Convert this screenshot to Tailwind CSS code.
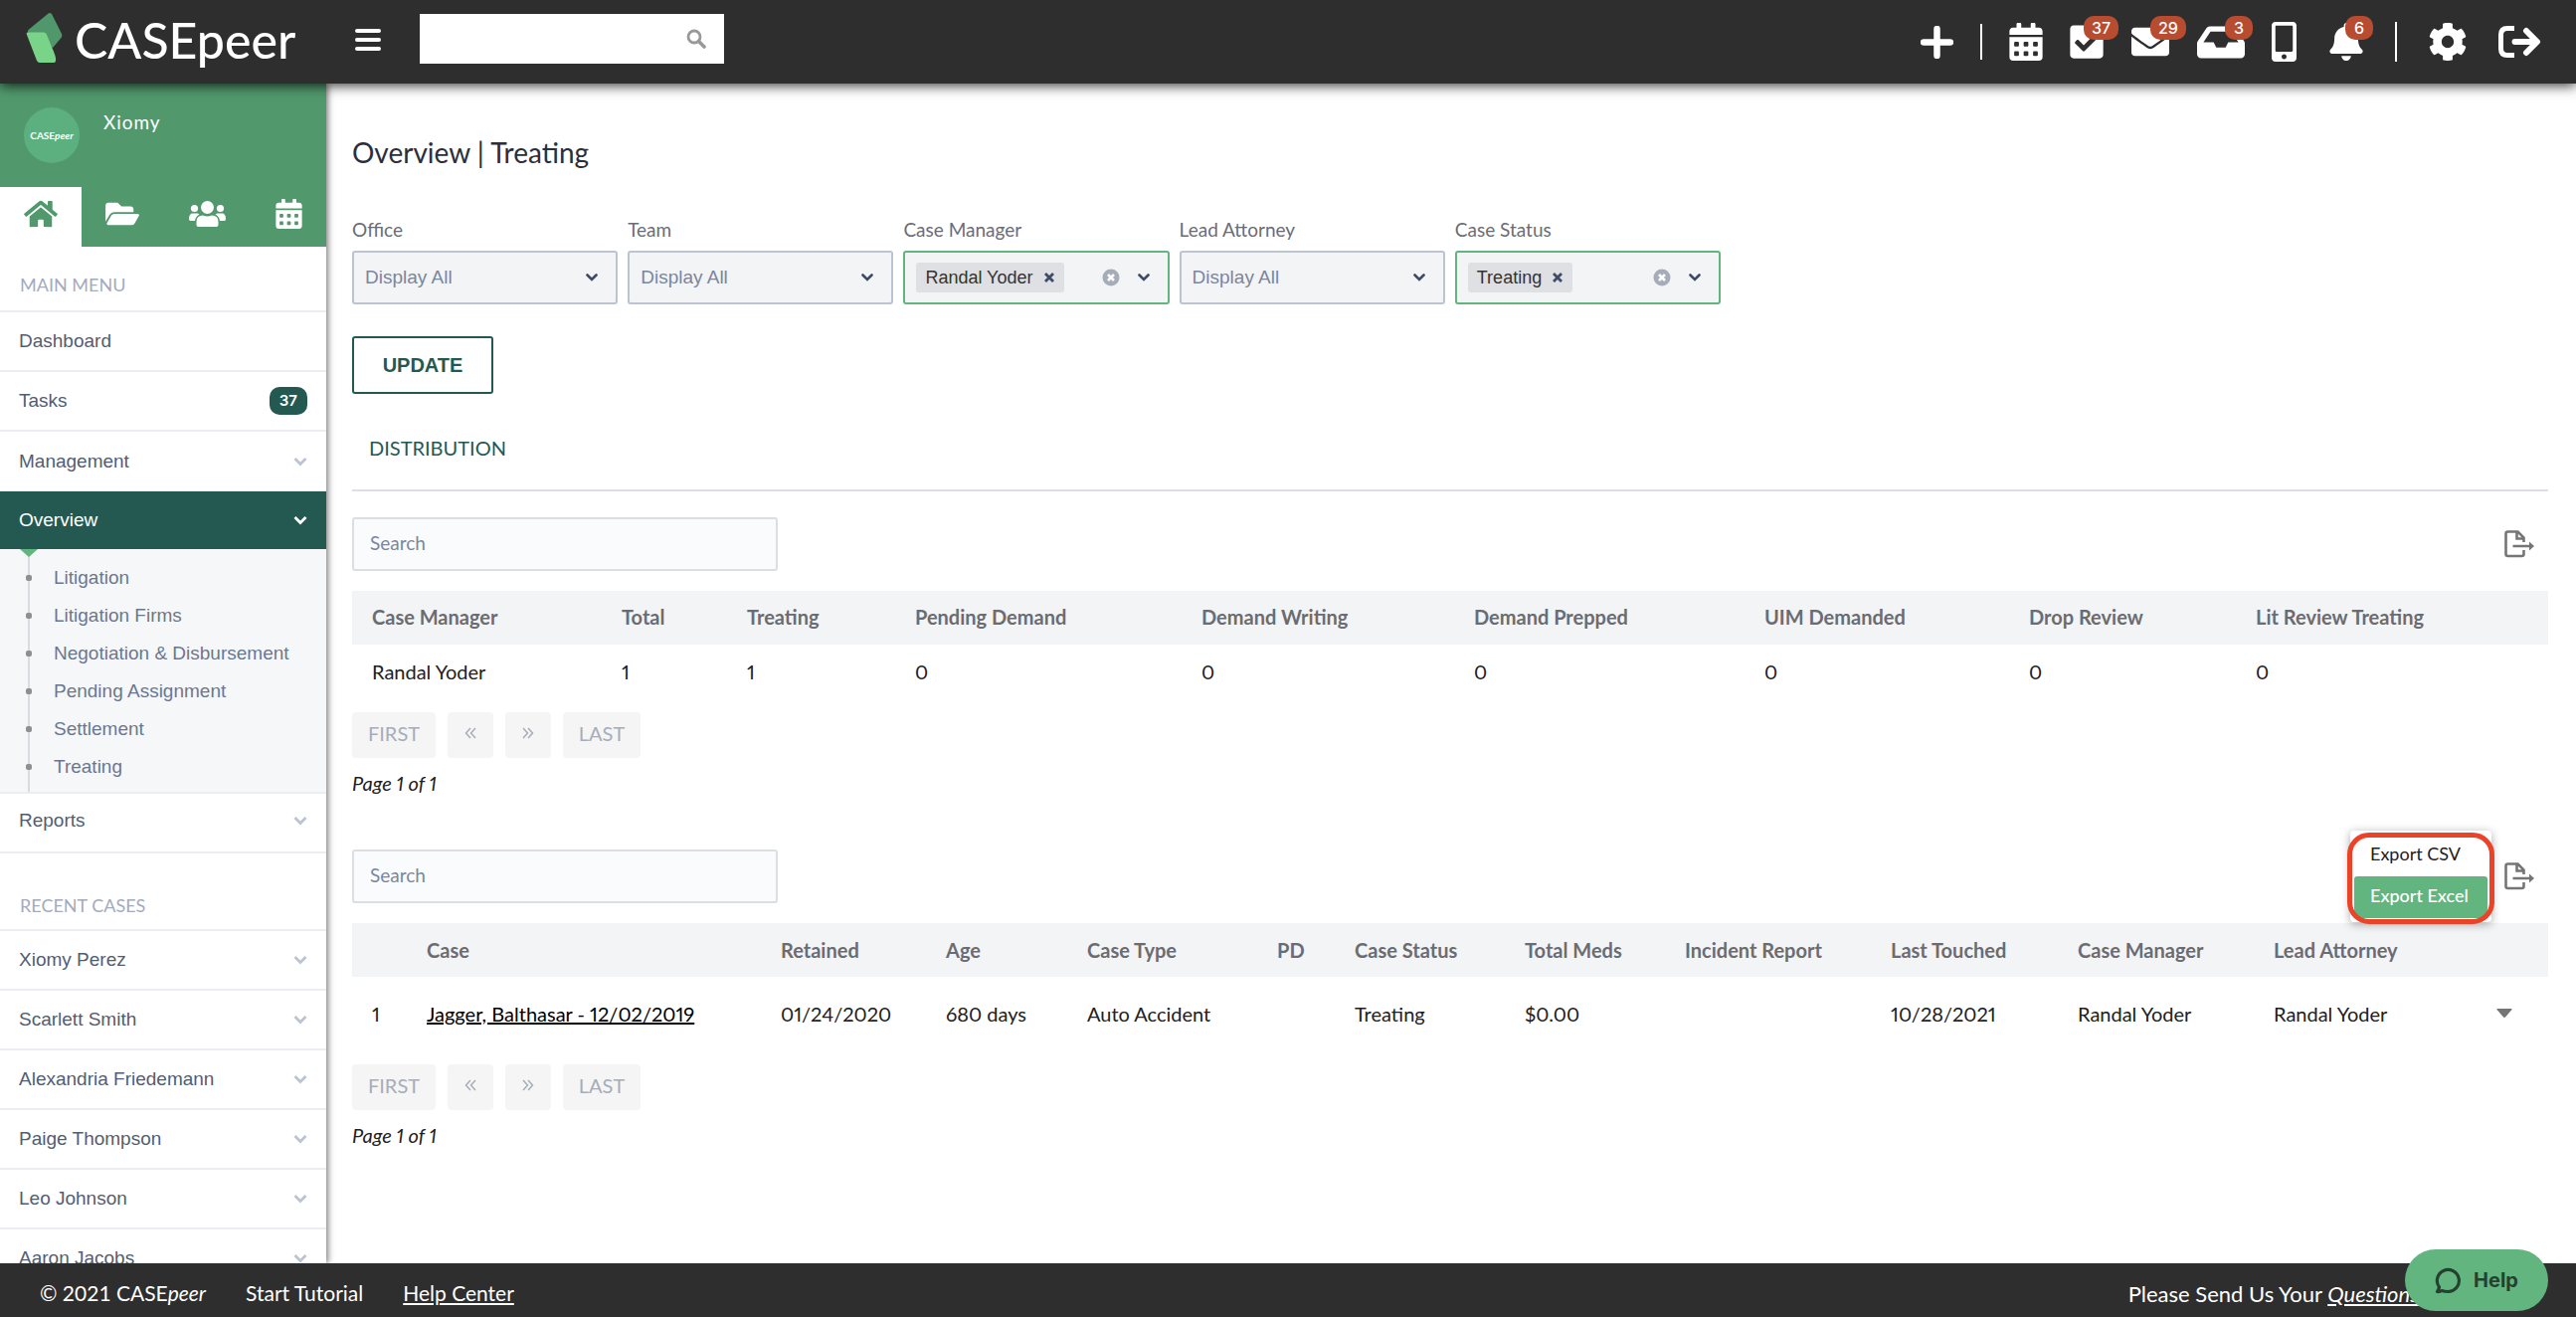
<!DOCTYPE html>
<html lang="en">
<head>
    <meta charset="UTF-8">
    <meta name="viewport" content="width=device-width, initial-scale=1.0">
    <title>CASEpeer - Overview | Treating</title>
    <script src="https://cdn.jsdelivr.net/npm/@tailwindcss/browser@4"></script>
</head>
<body class="bg-white font-['Lato','Liberation_Sans',sans-serif] text-[20px] text-[#212121]">

    <!-- Shared icon shapes -->
    <svg class="hidden">
        <symbol id="i-calendar" viewBox="0 0 448 512"><path fill="currentColor" fill-rule="evenodd" d="M0 464c0 26.500 21.500 48 48 48h352c26.500 0 48-21.500 48-48V192H0v272zM320 268q0-12 12-12h40q12 0 12 12v40q0 12-12 12h-40q-12 0-12-12zM320 396q0-12 12-12h40q12 0 12 12v40q0 12-12 12h-40q-12 0-12-12zM192 268q0-12 12-12h40q12 0 12 12v40q0 12-12 12h-40q-12 0-12-12zM192 396q0-12 12-12h40q12 0 12 12v40q0 12-12 12h-40q-12 0-12-12zM64 268q0-12 12-12h40q12 0 12 12v40q0 12-12 12H76q-12 0-12-12zM64 396q0-12 12-12h40q12 0 12 12v40q0 12-12 12H76q-12 0-12-12zM400 64h-48V16c0-8.800-7.200-16-16-16h-32c-8.800 0-16 7.200-16 16v48H160V16c0-8.800-7.200-16-16-16h-32c-8.800 0-16 7.200-16 16v48H48C21.500 64 0 85.500 0 112v48h448v-48c0-26.500-21.500-48-48-48z"/></symbol>
        <symbol id="i-chevron" viewBox="0 0 14 10"><path d="M1.500 2L7 7.500L12.500 2" fill="none" stroke="currentColor" stroke-width="2.800"/></symbol>
        <symbol id="i-caret" viewBox="0 0 12 8"><path d="M1.500 1.500L6 6L10.500 1.500" fill="none" stroke="currentColor" stroke-width="2.600" stroke-linecap="round"/></symbol>
        <symbol id="i-x" viewBox="0 0 12 12"><path d="M2 2L10 10M10 2L2 10" stroke="currentColor" stroke-width="2.800"/></symbol>
        <symbol id="i-clear" viewBox="0 0 18 18"><circle cx="9" cy="9" r="8.500" fill="#a6adb8"/><path d="M6 6L12 12M12 6L6 12" stroke="#fff" stroke-width="2.600"/></symbol>
        <symbol id="i-export" viewBox="0 0 30 28"><path d="M19.500 20V24Q19.500 26 17.500 26H3.500Q1.500 26 1.500 24V3.500Q1.500 1.500 3.500 1.500H13.500L19.500 7.500V12M12.500 1.500V8.500H19.500M8.500 16H26" fill="none" stroke="currentColor" stroke-width="2.600"/><path d="M25 11.500L30 16L25 20.500z" fill="currentColor"/></symbol>
        <symbol id="i-prev" viewBox="0 0 12 12"><path d="M6 1L1.500 6L6 11M11 1L6.500 6L11 11" fill="none" stroke="currentColor" stroke-width="1.500"/></symbol>
        <symbol id="i-next" viewBox="0 0 12 12"><path d="M1 1L5.500 6L1 11M6 1L10.500 6L6 11" fill="none" stroke="currentColor" stroke-width="1.500"/></symbol>
    </svg>

    <div class="flex h-screen flex-col overflow-hidden">

        <!-- Top bar -->
        <header class="relative z-20 flex h-[84px] shrink-0 items-center bg-[#2e2e2e] pl-[26px] pr-[35px] text-white shadow-[0_2px_12px_rgba(0,0,0,0.8)]">
            <a href="#" class="flex h-full w-[331px] items-center gap-3">
                <svg class="mb-2 h-[52px] w-[37px]" viewBox="0 0 37 52">
                    <path d="M22 2Q24 0 26 2L36 22Q37 24 35.500 26L27 36L3 21Q1 20 2.500 18Z" fill="#50976b"/>
                    <path d="M2 20.500H18Q20.500 20.500 21 23L25.500 34Q31 46 30 49Q30 51 28 51H14Q12 51 11 49L1 23Q0 20.500 2 20.500Z" fill="#79d48a"/>
                </svg>
                <span class="pb-1 text-[50px] leading-[60px] font-medium">CASEpeer</span>
            </a>
            <button type="button" aria-label="Toggle menu" class="mr-[39px] mb-1 flex w-[26px] flex-col gap-[5px]">
                <span class="h-1 w-full rounded-sm bg-white"></span>
                <span class="h-1 w-full rounded-sm bg-white"></span>
                <span class="h-1 w-full rounded-sm bg-white"></span>
            </button>
            <form class="mb-[6px] flex h-[50px] w-[306px] items-center bg-white pr-[18px]">
                <input type="text" aria-label="Search cases" class="h-full min-w-0 flex-1 px-3 text-black outline-none">
                <button type="button" aria-label="Search">
                    <svg class="size-5" viewBox="0 0 20 20"><circle cx="8" cy="8" r="6" fill="none" stroke="#999" stroke-width="2.800"/><path d="M12.500 12.500L18 18" stroke="#999" stroke-width="3.600" stroke-linecap="round"/></svg>
                </button>
            </form>

            <nav class="ml-auto flex items-center gap-[33px]">
                <div class="flex items-center gap-[27px]">
                    <button type="button" aria-label="Add"><svg class="size-[33px]" viewBox="0 0 33 33"><path d="M16.500 3V30M3 16.500H30" stroke="#fff" stroke-width="6.500" stroke-linecap="round"/></svg></button>
                    <span class="h-9 w-0.5 bg-white"></span>
                    <a href="#" aria-label="Calendar"><svg class="h-[38px] w-[34px]"><use href="#i-calendar"/></svg></a>
                    <a href="#" aria-label="Tasks" class="relative">
                        <svg class="h-[38px] w-[34px]" viewBox="0 0 448 512"><path fill="#fff" d="M400 480H48c-26.510 0-48-21.490-48-48V80c0-26.510 21.490-48 48-48h352c26.510 0 48 21.490 48 48v352c0 26.510-21.490 48-48 48zm-204.686-98.059l184-184c6.248-6.248 6.248-16.379 0-22.627l-22.627-22.627c-6.248-6.248-16.379-6.249-22.628 0L184 302.745l-70.059-70.059c-6.248-6.248-16.379-6.248-22.628 0l-22.627 22.627c-6.248 6.248-6.248 16.379 0 22.627l104 104c6.249 6.250 16.379 6.250 22.628.001z"/></svg>
                        <span class="absolute -top-[7px] left-[14px] rounded-[10px] bg-[#b84c30] px-2 font-['Inter'] text-[16px] leading-6 font-medium">37</span>
                    </a>
                    <a href="#" aria-label="Messages" class="relative">
                        <svg class="h-[38px] w-10" viewBox="0 0 512 512"><path fill="#fff" d="M502.300 190.800c3.900-3.100 9.700-.2 9.700 4.700V400c0 26.500-21.500 48-48 48H48c-26.500 0-48-21.500-48-48V195.600c0-5 5.700-7.800 9.700-4.700 22.400 17.400 52.100 39.500 154.100 113.600 21.100 15.400 56.700 47.800 92.200 47.600 35.700.3 72-32.800 92.300-47.600 102-74.100 131.600-96.300 154-113.700zM256 320c23.200.4 56.600-29.200 73.400-41.400 132.700-96.300 142.800-104.700 173.400-128.700 5.800-4.500 9.200-11.500 9.200-18.900v-19c0-26.500-21.500-48-48-48H48c-26.500 0-48 21.500-48 48v19c0 7.400 3.400 14.300 9.200 18.900 30.600 23.900 40.700 32.400 173.400 128.700 16.800 12.200 50.200 41.800 73.400 41.400z"/></svg>
                        <span class="absolute -top-[7px] left-[20px] rounded-[10px] bg-[#b84c30] px-2 font-['Inter'] text-[16px] leading-6 font-medium">29</span>
                    </a>
                    <a href="#" aria-label="Inbox" class="relative">
                        <svg class="h-[38px] w-12" viewBox="0 30 576 440"><path fill="#fff" d="M567.938 243.908L462.250 85.374A48.003 48.003 0 0 0 422.311 64H153.689a48 48 0 0 0-39.938 21.374L8.062 243.908A47.994 47.994 0 0 0 0 270.533V400c0 26.510 21.490 48 48 48h480c26.510 0 48-21.490 48-48V270.533a47.994 47.994 0 0 0-8.062-26.625zM162.252 128h251.497l85.333 128H376l-32 64H232l-32-64H76.918l85.334-128z"/></svg>
                        <span class="absolute -top-[7px] left-[28px] rounded-[10px] bg-[#b84c30] px-[9px] font-['Inter'] text-[16px] leading-6 font-medium">3</span>
                    </a>
                    <a href="#" aria-label="Texts"><svg class="h-10 w-[25px]" viewBox="0 0 320 512"><path fill="#fff" d="M272 0H48C21.500 0 0 21.500 0 48v416c0 26.500 21.500 48 48 48h224c26.500 0 48-21.500 48-48V48c0-26.500-21.500-48-48-48zM160 480c-17.700 0-32-14.300-32-32s14.300-32 32-32 32 14.300 32 32-14.300 32-32 32zm112-108c0 6.600-5.400 12-12 12H60c-6.600 0-12-5.400-12-12V60c0-6.600 5.400-12 12-12h200c6.600 0 12 5.400 12 12v312z"/></svg></a>
                </div>
                <div class="flex items-center gap-8">
                    <a href="#" aria-label="Notifications" class="relative">
                        <svg class="h-[38px] w-[34px]" viewBox="0 0 448 512"><path fill="#fff" d="M224 512c35.320 0 63.970-28.650 63.970-64H160.030c0 35.350 28.650 64 63.970 64zm215.390-149.710c-19.320-20.760-55.470-51.990-55.470-154.290 0-77.700-54.480-139.900-127.940-155.160V32c0-17.670-14.320-32-31.980-32s-31.980 14.330-31.980 32v20.840C118.560 68.100 64.080 130.300 64.080 208c0 102.300-36.150 133.530-55.470 154.290-6 6.450-8.660 14.160-8.610 21.710.11 16.400 12.980 32 32.100 32h383.800c19.120 0 32-15.600 32.100-32 .05-7.550-2.610-15.270-8.610-21.710z"/></svg>
                        <span class="absolute -top-[7px] left-[16px] rounded-[10px] bg-[#b84c30] px-[9px] font-['Inter'] text-[16px] leading-6 font-medium">6</span>
                    </a>
                    <span class="h-10 w-0.5 bg-white"></span>
                    <a href="#" aria-label="Settings"><svg class="size-[38px]" viewBox="8 8 496 496"><path fill="#fff" d="M487.400 315.700l-42.600-24.600c4.300-23.200 4.300-47 0-70.200l42.600-24.600c4.900-2.800 7.100-8.600 5.500-14-11.100-35.600-30-67.800-54.700-94.600-3.800-4.100-10-5.100-14.800-2.300L380.800 110c-17.900-15.400-38.500-27.300-60.800-35.100V25.800c0-5.600-3.900-10.500-9.400-11.700-36.700-8.200-74.300-7.800-109.200 0-5.500 1.200-9.400 6.100-9.400 11.700V75c-22.200 7.900-42.800 19.800-60.800 35.100L88.700 85.500c-4.900-2.800-11-1.900-14.800 2.300-24.700 26.700-43.600 58.900-54.700 94.600-1.700 5.400.6 11.200 5.500 14L67.300 221c-4.300 23.200-4.300 47 0 70.200l-42.600 24.600c-4.900 2.800-7.100 8.600-5.500 14 11.100 35.600 30 67.800 54.700 94.600 3.800 4.100 10 5.100 14.800 2.300l42.600-24.600c17.900 15.400 38.500 27.300 60.800 35.100v49.200c0 5.600 3.900 10.500 9.400 11.700 36.700 8.200 74.300 7.800 109.200 0 5.500-1.200 9.400-6.100 9.400-11.700v-49.200c22.200-7.900 42.800-19.800 60.800-35.100l42.600 24.600c4.900 2.800 11 1.900 14.800-2.300 24.700-26.700 43.600-58.900 54.700-94.600 1.500-5.500-.7-11.300-5.600-14.100zM256 336c-44.100 0-80-35.900-80-80s35.900-80 80-80 80 35.900 80 80-35.900 80-80 80z"/></svg></a>
                    <a href="#" aria-label="Log out"><svg class="h-8 w-[43px]" viewBox="0 0 43 32"><path d="M16 2.500H9Q2.500 2.500 2.500 9V23Q2.500 29.500 9 29.500H16" fill="none" stroke="#fff" stroke-width="5"/><path d="M16.500 16H36M28 5L39 16L28 27" fill="none" stroke="#fff" stroke-width="6" stroke-linecap="round" stroke-linejoin="round"/></svg></a>
                </div>
            </nav>
        </header>

        <div class="flex min-h-0 flex-1">

            <!-- Sidebar -->
            <aside class="relative z-10 w-[328px] shrink-0 overflow-hidden bg-white font-['Liberation_Sans',sans-serif] text-[19px] text-[#525d73] shadow-[2px_0_6px_rgba(0,0,0,0.5)]">
                <div class="bg-[#51996c] text-white">
                    <div class="flex h-[104px] gap-6 pt-6 pl-6 font-['Lato']">
                        <div class="flex size-14 items-center justify-center rounded-full bg-[#5cb07f] text-[10px] font-bold">CASE<i>peer</i></div>
                        <span class="pt-[3px] text-[19px] leading-6 tracking-wider">Xiomy</span>
                    </div>
                    <div class="grid h-[60px] grid-cols-4">
                        <a href="#" aria-label="Home" class="flex items-center justify-center bg-white pb-[6px] text-[#51996c]">
                            <svg class="h-[30px] w-[34px]" viewBox="0 0 576 512"><path fill="currentColor" d="M280.370 148.260L96 300.110V464a16 16 0 0 0 16 16l112.060-.29a16 16 0 0 0 15.920-16V368a16 16 0 0 1 16-16h64a16 16 0 0 1 16 16v95.640a16 16 0 0 0 16 16.050L464 480a16 16 0 0 0 16-16V300L295.670 148.260a12.190 12.190 0 0 0-15.300 0zM571.600 251.470L488 182.560V44.050a12 12 0 0 0-12-12h-56a12 12 0 0 0-12 12v72.610L318.470 43a48 48 0 0 0-61 0L4.340 251.470a12 12 0 0 0-1.600 16.900l25.500 31A12 12 0 0 0 45.150 301l235.220-193.740a12.190 12.190 0 0 1 15.300 0L530.900 301a12 12 0 0 0 16.900-1.600l25.500-31a12 12 0 0 0-1.700-16.930z"/></svg>
                        </a>
                        <a href="#" aria-label="Cases" class="flex items-center justify-center pb-[6px]">
                            <svg class="h-[30px] w-[34px]" viewBox="0 0 576 512"><path fill="currentColor" d="M572.694 292.093L500.270 416.248A63.997 63.997 0 0 1 444.989 448H45.025c-18.523 0-30.064-20.093-20.731-36.093l72.424-124.155A64 64 0 0 1 152 256h399.964c18.523 0 30.064 20.093 20.730 36.093zM152 224h328v-48c0-26.510-21.490-48-48-48H272l-64-64H48C21.490 64 0 85.490 0 112v278.046l69.077-118.418C86.214 242.250 117.989 224 152 224z"/></svg>
                        </a>
                        <a href="#" aria-label="Contacts" class="flex items-center justify-center pb-[6px] pl-[6px]">
                            <svg class="h-[26px] w-[37px]" viewBox="0 0 37 26"><g fill="currentColor"><circle cx="18.500" cy="6.500" r="6.500"/><circle cx="5.500" cy="7.500" r="3.600"/><circle cx="31.500" cy="7.500" r="3.600"/><path d="M7.500 24V21Q7.500 14.500 14 14.500Q18.500 16.500 23 14.500Q29.500 14.500 29.500 21V24Q29.500 26 27.500 26H9.500Q7.500 26 7.500 24zM0 18Q0 12.500 4 12.500H8Q9.500 12.500 10.500 13.500Q6.500 15.500 6 20H1.500Q0 20 0 18zM37 18Q37 12.500 33 12.500H29Q27.500 12.500 26.500 13.500Q30.500 15.500 31 20H35.500Q37 20 37 18z"/></g></svg>
                        </a>
                        <a href="#" aria-label="Calendar" class="flex items-center justify-center pb-[6px] pl-[6px]">
                            <svg class="h-[30px] w-[27px]"><use href="#i-calendar"/></svg>
                        </a>
                    </div>
                </div>

                <h2 class="flex h-[66px] items-end border-b-2 border-[#ebedf2] px-5 pb-[14px] font-['Lato'] text-[18px] leading-6 text-[#a3abbd]">MAIN MENU</h2>
                <nav>
                    <a href="#" class="flex h-[60px] items-center border-b-2 border-[#ebedf2] px-[19px]">Dashboard</a>
                    <a href="#" class="flex h-[60px] items-center justify-between border-b-2 border-[#ebedf2] px-[19px]">Tasks
                        <span class="rounded-[10px] bg-[#245952] px-[10px] font-['Inter'] text-[15px] leading-7 font-semibold text-white">37</span>
                    </a>
                    <a href="#" class="flex h-[60px] items-center justify-between px-[19px]">Management <svg class="h-[10px] w-[14px] text-[#bcc3d1]"><use href="#i-chevron"/></svg></a>
                    <a href="#" class="flex h-[58px] items-center justify-between bg-[#245952] px-[19px] text-white">Overview <svg class="h-[10px] w-[14px]"><use href="#i-chevron"/></svg></a>
                    <div class="relative border-b-2 border-[#ebedf2] bg-[#f6f7f9] pt-[10px] pb-[6px] text-[#6b7791]">
                        <span class="absolute top-0 left-7 h-full w-0.5 bg-[#d9dbe2]"></span>
                        <svg class="absolute top-0 left-5 h-2 w-[18px]" viewBox="0 0 18 8"><path d="M0 0H18L9 8z" fill="#63b57f"/></svg>
                        <a href="#" class="relative flex h-[38px] items-center gap-[22px] pl-[26px]"><span class="size-[6px] rounded-[2px] bg-[#8f8f8f]"></span>Litigation</a>
                        <a href="#" class="relative flex h-[38px] items-center gap-[22px] pl-[26px]"><span class="size-[6px] rounded-[2px] bg-[#8f8f8f]"></span>Litigation Firms</a>
                        <a href="#" class="relative flex h-[38px] items-center gap-[22px] pl-[26px]"><span class="size-[6px] rounded-[2px] bg-[#8f8f8f]"></span>Negotiation &amp; Disbursement</a>
                        <a href="#" class="relative flex h-[38px] items-center gap-[22px] pl-[26px]"><span class="size-[6px] rounded-[2px] bg-[#8f8f8f]"></span>Pending Assignment</a>
                        <a href="#" class="relative flex h-[38px] items-center gap-[22px] pl-[26px]"><span class="size-[6px] rounded-[2px] bg-[#8f8f8f]"></span>Settlement</a>
                        <a href="#" class="relative flex h-[38px] items-center gap-[22px] pl-[26px]"><span class="size-[6px] rounded-[2px] bg-[#8f8f8f]"></span>Treating</a>
                    </div>
                    <a href="#" class="flex h-[60px] items-center justify-between border-b-2 border-[#ebedf2] px-[19px] pb-1">Reports <svg class="h-[10px] w-[14px] text-[#bcc3d1]"><use href="#i-chevron"/></svg></a>
                </nav>

                <h2 class="flex h-[78px] items-end border-b-2 border-[#ebedf2] px-5 pb-3 font-['Lato'] text-[18px] leading-6 text-[#a3abbd]">RECENT CASES</h2>
                <nav>
                    <a href="#" class="flex h-[60px] items-center justify-between border-b-2 border-[#ebedf2] px-[19px]">Xiomy Perez <svg class="h-[10px] w-[14px] text-[#bcc3d1]"><use href="#i-chevron"/></svg></a>
                    <a href="#" class="flex h-[60px] items-center justify-between border-b-2 border-[#ebedf2] px-[19px]">Scarlett Smith <svg class="h-[10px] w-[14px] text-[#bcc3d1]"><use href="#i-chevron"/></svg></a>
                    <a href="#" class="flex h-[60px] items-center justify-between border-b-2 border-[#ebedf2] px-[19px]">Alexandria Friedemann <svg class="h-[10px] w-[14px] text-[#bcc3d1]"><use href="#i-chevron"/></svg></a>
                    <a href="#" class="flex h-[60px] items-center justify-between border-b-2 border-[#ebedf2] px-[19px]">Paige Thompson <svg class="h-[10px] w-[14px] text-[#bcc3d1]"><use href="#i-chevron"/></svg></a>
                    <a href="#" class="flex h-[60px] items-center justify-between border-b-2 border-[#ebedf2] px-[19px]">Leo Johnson <svg class="h-[10px] w-[14px] text-[#bcc3d1]"><use href="#i-chevron"/></svg></a>
                    <a href="#" class="flex h-[60px] items-center justify-between border-b-2 border-[#ebedf2] px-[19px]">Aaron Jacobs <svg class="h-[10px] w-[14px] text-[#bcc3d1]"><use href="#i-chevron"/></svg></a>
                </nav>
            </aside>

            <!-- Content -->
            <main class="min-w-0 flex-1 overflow-hidden pt-[51px] pr-7 pl-[26px] proportional-nums">
                <h1 class="text-[28px] leading-9 text-[#2b2f3b]">Overview | Treating</h1>

                <!-- Filters -->
                <form class="mt-12">
                    <div class="grid max-w-[1376px] grid-cols-5 gap-[10px]">
                        <div>
                            <label for="office" class="mb-[9px] block text-[19px] leading-6 text-[#6a6d75]">Office</label>
                            <div class="relative">
                                <select id="office" class="h-[54px] w-full appearance-none rounded-[3px] border-2 border-[#bcc3d1] bg-[#f3f4f6] px-[11px] font-['Liberation_Sans'] text-[19px] text-[#7c869c]"><option>Display All</option></select>
                                <svg class="pointer-events-none absolute top-[23px] right-5 h-2 w-3 text-[#3d4b66]"><use href="#i-caret"/></svg>
                            </div>
                        </div>
                        <div>
                            <label for="team" class="mb-[9px] block text-[19px] leading-6 text-[#6a6d75]">Team</label>
                            <div class="relative">
                                <select id="team" class="h-[54px] w-full appearance-none rounded-[3px] border-2 border-[#bcc3d1] bg-[#f3f4f6] px-[11px] font-['Liberation_Sans'] text-[19px] text-[#7c869c]"><option>Display All</option></select>
                                <svg class="pointer-events-none absolute top-[23px] right-5 h-2 w-3 text-[#3d4b66]"><use href="#i-caret"/></svg>
                            </div>
                        </div>
                        <div>
                            <label for="manager" class="mb-[9px] block text-[19px] leading-6 text-[#6a6d75]">Case Manager</label>
                            <div class="flex h-[54px] items-center rounded-[3px] border-2 border-[#63b57f] bg-[#f3f4f6] pr-[18px] pl-[11px]">
                                <span class="flex h-[30px] items-center gap-[10px] rounded-[3px] bg-[#dfe0e3] px-[9px] font-['Liberation_Sans'] text-[18px] whitespace-nowrap text-[#333]">Randal Yoder
                                    <button type="button" aria-label="Remove Randal Yoder"><svg class="size-3 text-[#3d4b66]"><use href="#i-x"/></svg></button>
                                </span>
                                <input id="manager" type="text" class="w-0 min-w-0 flex-1 outline-none">
                                <button type="button" aria-label="Clear"><svg class="size-[18px]"><use href="#i-clear"/></svg></button>
                                <svg class="ml-[18px] h-2 w-3 text-[#3d4b66]"><use href="#i-caret"/></svg>
                            </div>
                        </div>
                        <div>
                            <label for="attorney" class="mb-[9px] block text-[19px] leading-6 text-[#6a6d75]">Lead Attorney</label>
                            <div class="relative">
                                <select id="attorney" class="h-[54px] w-full appearance-none rounded-[3px] border-2 border-[#bcc3d1] bg-[#f3f4f6] px-[11px] font-['Liberation_Sans'] text-[19px] text-[#7c869c]"><option>Display All</option></select>
                                <svg class="pointer-events-none absolute top-[23px] right-5 h-2 w-3 text-[#3d4b66]"><use href="#i-caret"/></svg>
                            </div>
                        </div>
                        <div>
                            <label for="status" class="mb-[9px] block text-[19px] leading-6 text-[#6a6d75]">Case Status</label>
                            <div class="flex h-[54px] items-center rounded-[3px] border-2 border-[#63b57f] bg-[#f3f4f6] pr-[18px] pl-[11px]">
                                <span class="flex h-[30px] items-center gap-[10px] rounded-[3px] bg-[#dfe0e3] px-[9px] font-['Liberation_Sans'] text-[18px] whitespace-nowrap text-[#333]">Treating
                                    <button type="button" aria-label="Remove Treating"><svg class="size-3 text-[#3d4b66]"><use href="#i-x"/></svg></button>
                                </span>
                                <input id="status" type="text" class="w-0 min-w-0 flex-1 outline-none">
                                <button type="button" aria-label="Clear"><svg class="size-[18px]"><use href="#i-clear"/></svg></button>
                                <svg class="ml-[18px] h-2 w-3 text-[#3d4b66]"><use href="#i-caret"/></svg>
                            </div>
                        </div>
                    </div>
                    <button type="button" class="mt-8 block h-[58px] w-[142px] rounded-[3px] border-2 border-[#245952] font-['Liberation_Sans'] text-[20px] font-bold text-[#245952]">UPDATE</button>
                </form>

                <div class="mt-10 border-b-2 border-[#dcdfe6] px-[17px] pb-7">
                    <a href="#" class="block leading-7 text-[#245952]">DISTRIBUTION</a>
                </div>

                <!-- Distribution table -->
                <section class="mt-[26px]">
                    <div class="flex items-center justify-between pr-[14px]">
                        <input type="text" placeholder="Search" aria-label="Search distribution" class="h-[54px] w-[428px] rounded-[3px] border-2 border-[#dcdee3] bg-[#fafbfd] px-4 pb-[3px] text-[19px] placeholder:text-[#7c869c]">
                        <button type="button" aria-label="Export"><svg class="h-7 w-[30px] text-[#757575]"><use href="#i-export"/></svg></button>
                    </div>
                    <table class="mt-5 w-full table-fixed text-left">
                        <thead>
                            <tr class="h-[54px] bg-[#f3f4f6] text-[#6b6c72]">
                                <th class="w-[251px] pb-[3px] pl-5">Case Manager</th>
                                <th class="w-[126px] pb-[3px] pl-5">Total</th>
                                <th class="w-[169px] pb-[3px] pl-5">Treating</th>
                                <th class="w-[288px] pb-[3px] pl-5">Pending Demand</th>
                                <th class="w-[274px] pb-[3px] pl-5">Demand Writing</th>
                                <th class="w-[292px] pb-[3px] pl-5">Demand Prepped</th>
                                <th class="w-[266px] pb-[3px] pl-5">UIM Demanded</th>
                                <th class="w-[228px] pb-[3px] pl-5">Drop Review</th>
                                <th class="w-[314px] pb-[3px] pl-5">Lit Review Treating</th>
                            </tr>
                        </thead>
                        <tbody>
                            <tr class="h-14">
                                <td class="pb-[3px] pl-5">Randal Yoder</td>
                                <td class="pb-[3px] pl-5">1</td>
                                <td class="pb-[3px] pl-5">1</td>
                                <td class="pb-[3px] pl-5">0</td>
                                <td class="pb-[3px] pl-5">0</td>
                                <td class="pb-[3px] pl-5">0</td>
                                <td class="pb-[3px] pl-5">0</td>
                                <td class="pb-[3px] pl-5">0</td>
                                <td class="pb-[3px] pl-5">0</td>
                            </tr>
                        </tbody>
                    </table>
                    <div class="mt-3 flex gap-3 text-[#a6adb8]">
                        <button type="button" class="h-[46px] w-[84px] rounded bg-[#f5f5f5] pb-1">FIRST</button>
                        <button type="button" aria-label="Previous" class="flex h-[46px] w-[46px] items-center justify-center rounded bg-[#f5f5f5] pb-1"><svg class="size-3"><use href="#i-prev"/></svg></button>
                        <button type="button" aria-label="Next" class="flex h-[46px] w-[46px] items-center justify-center rounded bg-[#f5f5f5] pb-1"><svg class="size-3"><use href="#i-next"/></svg></button>
                        <button type="button" class="h-[46px] w-[78px] rounded bg-[#f5f5f5] pb-1">LAST</button>
                    </div>
                    <p class="mt-[11px] leading-7 italic">Page 1 of 1</p>
                </section>

                <!-- Cases table -->
                <section class="mt-[53px]">
                    <div class="relative flex items-center justify-between pr-[14px]">
                        <input type="text" placeholder="Search" aria-label="Search cases table" class="h-[54px] w-[428px] rounded-[3px] border-2 border-[#dcdee3] bg-[#fafbfd] px-4 pb-[3px] text-[19px] placeholder:text-[#7c869c]">
                        <button type="button" aria-label="Export"><svg class="h-7 w-[30px] text-[#757575]"><use href="#i-export"/></svg></button>
                        <!-- Export menu -->
                        <div class="absolute -top-[19px] right-[57px] w-[142px] rounded bg-white p-1 text-[18px] shadow-[0_2px_10px_rgba(0,0,0,0.35)]">
                            <button type="button" class="block h-[42px] w-full rounded-[3px] pb-[3px] pl-4 text-left">Export CSV</button>
                            <button type="button" class="block h-[42px] w-full rounded-[3px] bg-[#63b57f] pb-[3px] pl-4 text-left font-medium text-white">Export Excel</button>
                            <span class="pointer-events-none absolute -inset-x-[3px] top-[2px] -bottom-[2px] rounded-[22px] border-[5px] border-[#ec4227]"></span>
                        </div>
                    </div>
                    <table class="mt-5 w-full table-fixed text-left">
                        <thead>
                            <tr class="h-[54px] bg-[#f3f4f6] text-[#6b6c72]">
                                <th class="w-[55px]"></th>
                                <th class="w-[356px] pl-5">Case</th>
                                <th class="w-[166px] pl-5">Retained</th>
                                <th class="w-[142px] pl-5">Age</th>
                                <th class="w-[191px] pl-5">Case Type</th>
                                <th class="w-[78px] pl-5">PD</th>
                                <th class="w-[171px] pl-5">Case Status</th>
                                <th class="w-[161px] pl-5">Total Meds</th>
                                <th class="w-[207px] pl-5">Incident Report</th>
                                <th class="w-[188px] pl-5">Last Touched</th>
                                <th class="w-[197px] pl-5">Case Manager</th>
                                <th class="w-[211px] pl-5">Lead Attorney</th>
                                <th class="w-[85px]"></th>
                            </tr>
                        </thead>
                        <tbody>
                            <tr class="h-[76px]">
                                <td class="pb-[3px] pl-5">1</td>
                                <td class="pb-[3px] pl-5"><a href="#" class="text-black underline">Jagger, Balthasar - 12/02/2019</a></td>
                                <td class="pb-[3px] pl-5">01/24/2020</td>
                                <td class="pb-[3px] pl-5">680 days</td>
                                <td class="pb-[3px] pl-5">Auto Accident</td>
                                <td class="pb-[3px] pl-5"></td>
                                <td class="pb-[3px] pl-5">Treating</td>
                                <td class="pb-[3px] pl-5">$0.00</td>
                                <td class="pb-[3px] pl-5"></td>
                                <td class="pb-[3px] pl-5">10/28/2021</td>
                                <td class="pb-[3px] pl-5">Randal Yoder</td>
                                <td class="pb-[3px] pl-5">Randal Yoder</td>
                                <td class="pb-[3px] pl-[33px]"><button type="button" aria-label="Expand row" class="block"><svg class="h-[9px] w-4" viewBox="0 0 16 9"><path d="M1 0H15Q16 0 15.500 1L9 8.500Q8 9.300 7 8.500L.5 1Q0 0 1 0z" fill="#757575"/></svg></button></td>
                            </tr>
                        </tbody>
                    </table>
                    <div class="mt-3 flex gap-3 text-[#a6adb8]">
                        <button type="button" class="h-[46px] w-[84px] rounded bg-[#f5f5f5] pb-1">FIRST</button>
                        <button type="button" aria-label="Previous" class="flex h-[46px] w-[46px] items-center justify-center rounded bg-[#f5f5f5] pb-1"><svg class="size-3"><use href="#i-prev"/></svg></button>
                        <button type="button" aria-label="Next" class="flex h-[46px] w-[46px] items-center justify-center rounded bg-[#f5f5f5] pb-1"><svg class="size-3"><use href="#i-next"/></svg></button>
                        <button type="button" class="h-[46px] w-[78px] rounded bg-[#f5f5f5] pb-1">LAST</button>
                    </div>
                    <p class="mt-[11px] leading-7 italic">Page 1 of 1</p>
                </section>
            </main>
        </div>

        <!-- Footer -->
        <footer class="relative z-20 flex h-[54px] shrink-0 items-center bg-[#2e2e2e] pt-[6px] pr-[158px] pl-10 text-[21px] text-white">
            <span class="mr-10">© 2021 CASE<i>peer</i></span>
            <a href="#" class="mr-10">Start Tutorial</a>
            <a href="#" class="underline">Help Center</a>
            <span class="ml-auto text-[22px]">Please Send Us Your <a href="#" class="italic underline">Questions</a></span>
            <button type="button" class="absolute right-7 bottom-[6px] flex h-[62px] w-36 items-center justify-center gap-3 rounded-full bg-[#63b57f] font-['Inter'] text-[20px] font-bold text-[#26402f]">
                <svg class="size-[27px]" viewBox="0 0 27 27"><path d="M7 23.500Q10 24.500 13.500 24.500A11 11 0 1 0 4.500 20Q4 22 2.500 24.500Q5 25 7 23.500z" fill="none" stroke="currentColor" stroke-width="3.200" stroke-linejoin="round"/></svg>
                Help
            </button>
        </footer>
    </div>

</body>
</html>
